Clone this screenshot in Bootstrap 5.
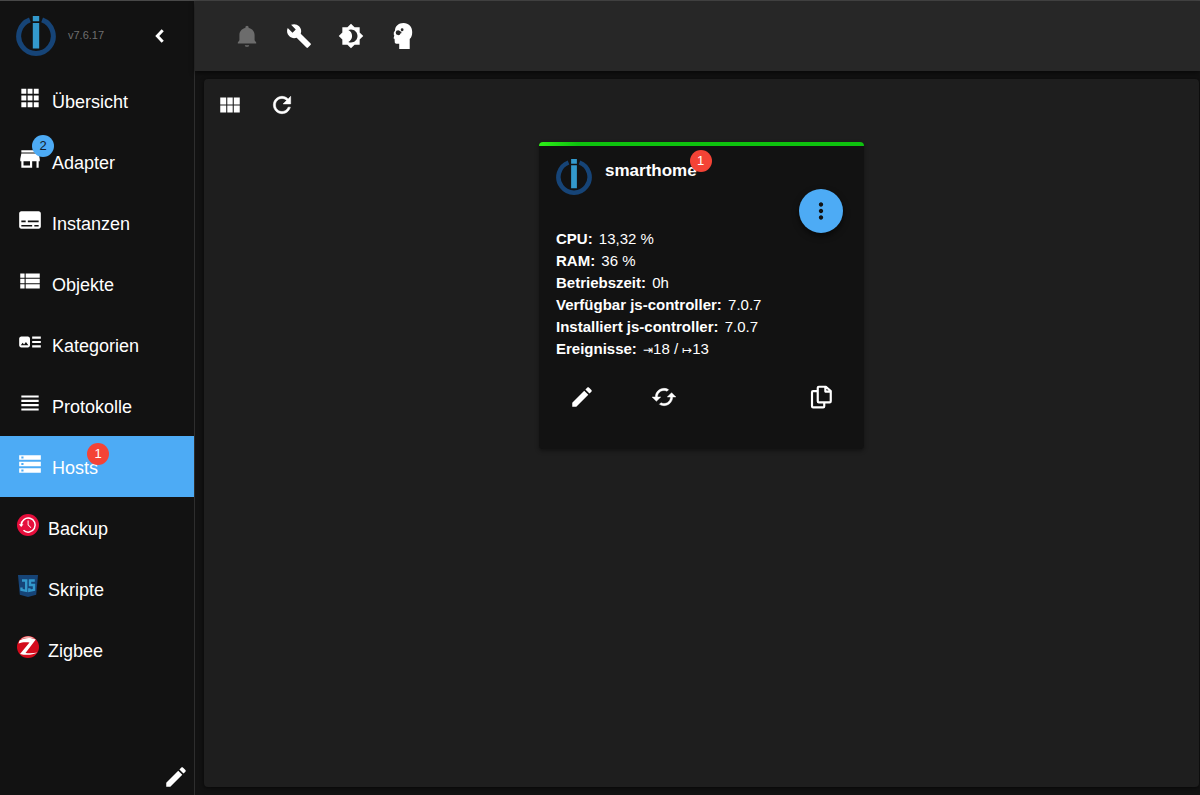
<!DOCTYPE html>
<html lang="de" data-bs-theme="dark">
<head>
<meta charset="utf-8">
<meta name="viewport" content="width=device-width, initial-scale=1">
<title>ioBroker – Hosts</title>
<link href="https://cdn.jsdelivr.net/npm/bootstrap@5.3.0/dist/css/bootstrap.min.css" rel="stylesheet">
<style>
  body { background: #121212; color: #fff; font-family: "Liberation Sans", Arial, sans-serif; }
  .app-shell { border-top: 1px solid #484848; }
  .side-menu { width: 195px; background: #121212; border-right: 1px solid #2e2e2e; }
  .side-head { height: 69px; padding: 0 8px 0 16px; }
  .side-version { color: #6f6f6f; font-size: 11px; margin-left: 12px; }
  .menu-link { height: 61px; padding: 0 17px; color: #fff; font-size: 18px; line-height: 20px; }
  .menu-link:hover { color: #fff; background: #222; }
  .menu-link.active { background: #4dabf5; }
  .menu-link svg { margin-bottom: 5px; }
  .menu-text { margin: 3px 0 0 9px; }
  .icon-26 { width: 26px; height: 26px; fill: currentColor; flex: none; }
  .icon-22 { width: 22px; height: 22px; flex: none; }
  .count-dot { position: absolute; width: 22px; height: 22px; font-size: 13px; line-height: 22px; padding: 0; font-weight: 400; border-radius: 11px; }
  .count-blue { background: #4dabf5; color: #13202c; }
  .count-red { background: #f44336; color: #fff; }
  .count-raised { top: -4px; }
  .icon-btn { width: 52px; height: 52px; padding: 13px; border: 0; color: #fff; display: inline-flex; border-radius: 50%; flex: none; }
  .icon-btn:disabled { color: #6c6c6c; opacity: 1; border: 0; }
  .icon-btn-small { width: 36px; height: 36px; padding: 5px; }
  .top-bar { height: 70px; background: #272727; padding: 0 26px; box-shadow: 0 2px 5px #0009; }
  .work-area { background: #1e1e1e; margin: 8px 1px 8px 9px; border-radius: 4px; box-shadow: 0 1px 4px #000a; }
  .host-card { width: 325px; margin-top: 11px; background: #121212; border: 0; border-radius: 4px; overflow: hidden; box-shadow: 0 2px 4px #0006; }
  .host-status { height: 4px; background: linear-gradient(90deg, #2ef018, #0ec20e 12%, #0ec20e); }
  .host-body { padding: 13px 17px 26px; }
  .host-head { height: 74px; margin-bottom: -5px; }
  .host-name { font-size: 17px; line-height: 20px; font-weight: 700; margin: 2px 0 0 13px; }
  .host-menu { width: 44px; height: 44px; padding: 9px; border: 0; border-radius: 50%; background: #4dabf5; color: #121212; margin-right: 4px; box-shadow: 0 3px 6px #0009; display: flex; }
  .host-facts { font-size: 15px; line-height: 22px; margin: 0 0 11px; }
  .host-facts dt, .host-facts dd { display: inline; margin: 0; }
  .host-facts dd { margin-left: 2px; }
  .event-arrow { font-size: 12px; line-height: 1; }
  .host-actions { gap: 30px; }
</style>
</head>
<body>
<svg width="0" height="0" class="d-none" aria-hidden="true">
  <symbol id="logo" viewBox="0 0 40 40">
    <path d="M13.900 3.900A17.300 17.300 0 1 0 26.100 3.900" fill="none" stroke="#164477" stroke-width="5"/>
    <path d="M16.800 0h6.400v5.300h-6.400zM16.800 7h6.400v25.500h-6.400z" fill="#3399cc"/>
  </symbol>
  <symbol id="pencil" viewBox="0 0 24 24"><path d="M3 17.250V21h3.750L17.810 9.940l-3.750-3.750L3 17.250zM20.710 7.040c.39-.39.39-1.020 0-1.410l-2.340-2.340c-.39-.39-1.020-.39-1.410 0l-1.830 1.830 3.750 3.750 1.830-1.830z"/></symbol>
</svg>

<div class="app-shell d-flex min-vh-100">
  <aside class="side-menu d-flex flex-column flex-shrink-0">
    <div class="side-head d-flex align-items-center">
      <svg width="40" height="40"><use href="#logo"/></svg>
      <span class="side-version">v7.6.17</span>
      <button class="btn icon-btn ms-auto" type="button" aria-label="Menü einklappen">
        <svg class="icon-26" viewBox="0 0 24 24"><path d="M14.500 6.700L9.500 12l5 5.300" fill="none" stroke="currentColor" stroke-width="2.700"/></svg>
      </button>
    </div>
    <nav class="nav flex-column flex-nowrap">
      <a class="menu-link d-flex align-items-center text-decoration-none" href="#">
        <svg class="icon-26" viewBox="0 0 24 24"><path d="M4 8h4.600V3.500H4V8zm5.800 12.500h4.500V16H9.800v4.500zm-5.800 0h4.600V16H4v4.500zm0-6.200h4.600V9.700H4v4.600zm5.800 0h4.500V9.700H9.800v4.600zM15.500 3.500V8H20V3.500h-4.500zM9.800 8h4.500V3.500H9.800V8zm5.700 6.300H20V9.700h-4.500v4.600zm0 6.200H20V16h-4.500v4.500z"/></svg>
        <span class="menu-text">Übersicht</span>
      </a>
      <a class="menu-link d-flex align-items-center text-decoration-none" href="#">
        <span class="position-relative d-flex">
          <svg class="icon-26" viewBox="0 0 24 24"><path d="M20 4H4v2h16V4zm1 10v-2l-1-5H4l-1 5v2h1v6h10v-6h4v6h2v-6h1zm-9 4H6v-4h6v4z"/></svg>
          <span class="badge count-dot count-blue top-0 start-100 translate-middle">2</span>
        </span>
        <span class="menu-text">Adapter</span>
      </a>
      <a class="menu-link d-flex align-items-center text-decoration-none" href="#">
        <svg class="icon-26" viewBox="0 0 24 24"><path d="M20 4H4c-1.100 0-2 .9-2 2v12c0 1.100.9 2 2 2h16c1.100 0 2-.9 2-2V6c0-1.100-.9-2-2-2zM4 12.500h4v1.500H4v-1.500zm10 5.500H4v-1.500h10V18zm6 0h-4v-1.500h4V18zm0-4H10v-1.500h10V14z"/></svg>
        <span class="menu-text">Instanzen</span>
      </a>
      <a class="menu-link d-flex align-items-center text-decoration-none" href="#">
        <svg class="icon-26" viewBox="0 0 24 24"><path d="M3 14h4v-4H3v4zm0 5h4v-4H3v4zM3 9h4V5H3v4zm5 5h13v-4H8v4zm0 5h13v-4H8v4zM8 5v4h13V5H8z"/></svg>
        <span class="menu-text">Objekte</span>
      </a>
      <a class="menu-link d-flex align-items-center text-decoration-none" href="#">
        <svg class="icon-26" viewBox="0 0 24 24"><path d="M22 13h-8v-2h8v2zm0-6h-8v2h8V7zm-8 10h8v-2h-8v2zm-2-8v6c0 1.100-.9 2-2 2H4c-1.100 0-2-.9-2-2V9c0-1.100.9-2 2-2h6c1.100 0 2 .9 2 2zm-1.500 6l-2.250-3-1.750 2.260-1.250-1.510L3.500 15h7z"/></svg>
        <span class="menu-text">Kategorien</span>
      </a>
      <a class="menu-link d-flex align-items-center text-decoration-none" href="#">
        <svg class="icon-26" viewBox="0 0 24 24"><path d="M4 15h16v-2H4v2zm0 4h16v-2H4v2zm0-8h16V9H4v2zm0-6v2h16V5H4z"/></svg>
        <span class="menu-text">Protokolle</span>
      </a>
      <a class="menu-link active d-flex align-items-center text-decoration-none" href="#" aria-current="page">
        <svg class="icon-26" viewBox="0 0 24 24"><path fill-rule="evenodd" d="M2 20h20v-4H2v4zm2-3h2v2H4v-2zM2 4v4h20V4H2zm4 3H4V5h2v2zm-4 7h20v-4H2v4zm2-3h2v2H4v-2z"/></svg>
        <span class="menu-text position-relative">Hosts<span class="badge count-dot count-red count-raised start-100 translate-middle">1</span></span>
      </a>
      <a class="menu-link d-flex align-items-center text-decoration-none" href="#">
        <svg class="icon-22" viewBox="0 0 22 22"><circle cx="11" cy="11" r="11" fill="#e60e3c"/><path d="M4.200 11a7 7 0 1 1 2.300 5.300" fill="none" stroke="#fff" stroke-width="1.500"/><path d="M1.900 10.200h4.600L4.200 13zM10.600 6.500h1v4.200l2.700 2.700-.7.7-3-3z" fill="#fff"/></svg>
        <span class="menu-text">Backup</span>
      </a>
      <a class="menu-link d-flex align-items-center text-decoration-none" href="#">
        <svg class="icon-22" viewBox="0 0 22 22"><path d="M1 0h20l-1.800 19.800L11 22l-8.200-2.200z" fill="#164477"/><path d="M5 5.500h4.200v10.300l-4.700-1v-2.300M17.800 5.500h-4.800v4.500h4v4.800l-4.700 1v-2.500" fill="none" stroke="#3399cc" stroke-width="2.400"/></svg>
        <span class="menu-text">Skripte</span>
      </a>
      <a class="menu-link d-flex align-items-center text-decoration-none" href="#">
        <svg class="icon-22" viewBox="0 0 22 22"><circle cx="11" cy="11" r="11" fill="#d30b1c"/><path d="M2.500 4.500C7 1.500 14 1 18.800 3.500L8.500 17c4 .5 8 .3 12-.5-5 2.500-11.300 3-17.500 1.500L12.500 6.500C9 5.900 5 6 1.500 7.500z" fill="#fff"/><path d="M3.500 3.400C8-.8 14-.8 18 2.700 13 1.700 8 2 3.500 3.400z" fill="#efb1ad"/></svg>
        <span class="menu-text">Zigbee</span>
      </a>
    </nav>
    <button class="btn icon-btn icon-btn-small ms-auto mt-auto" type="button" aria-label="Menü bearbeiten">
      <svg class="icon-26"><use href="#pencil"/></svg>
    </button>
  </aside>

  <div class="d-flex flex-column flex-grow-1">
    <header class="top-bar d-flex align-items-center">
      <button class="btn icon-btn" type="button" disabled aria-label="Benachrichtigungen"><svg class="icon-26" viewBox="0 0 24 24"><path d="M12 22c1.100 0 2-.6 2-1.500h-4c0 .9.890 1.500 2 1.500zm7-6v-5c0-3.070-2.140-5.640-5.500-6.320V4c0-.83-.67-1.500-1.500-1.500s-1.500.67-1.500 1.500v.68C7.130 5.360 5 7.920 5 11v5l-1.500 2v1h17v-1L19 16z"/></svg></button>
      <button class="btn icon-btn" type="button" aria-label="Systemeinstellungen"><svg class="icon-26" viewBox="0 0 24 24"><path d="M22.700 19l-9.100-9.100c.9-2.300.4-5-1.500-6.900-2-2-5-2.400-7.400-1.300L9 6 6 9 1.600 4.700C.4 7.100.9 10.100 2.900 12.100c1.900 1.900 4.600 2.400 6.900 1.500l9.100 9.100c.4.4 1 .4 1.400 0l2.300-2.300c.5-.4.5-1.100.1-1.400z"/></svg></button>
      <button class="btn icon-btn" type="button" aria-label="Farbschema"><svg class="icon-26" viewBox="0 0 24 24"><path d="M20 8.690V4h-4.690L12 .69 8.690 4H4v4.690L.69 12 4 15.310V20h4.690L12 23.310 15.310 20H20v-4.690L23.310 12 20 8.690zM12 18c-.89 0-1.740-.2-2.500-.55C11.560 16.500 13 14.420 13 12s-1.440-4.500-3.500-5.450C10.260 6.200 11.110 6 12 6c3.310 0 6 2.690 6 6s-2.690 6-6 6z"/></svg></button>
      <button class="btn icon-btn" type="button" aria-label="Expertenmodus"><svg class="icon-26" viewBox="0 0 24 24"><path fill-rule="evenodd" d="M12.500 0C7.700 0 4.700 3 4.600 7L3.500 8.800v2l.5.700-.6 2c-.2.600.1 1 .8 1.100l.2 3.200c.1.900.6 1.300 1.500 1.300h2.600V24h9.700v-9.300c1.700-1.600 2.300-3.700 2.300-6.500C20.500 3.300 17.200 0 12.500 0zM7.600 6.600a2.300 2.300 0 0 1 2 1.300h.9v1.500h-.7a2.300 2.300 0 1 1-2.200-2.800zM11.200 4.900a1.300 1.300 0 1 1 0 2.600 1.300 1.300 0 0 1 0-2.600z"/></svg></button>
    </header>
    <main class="work-area flex-grow-1">
      <div class="d-flex">
        <button class="btn icon-btn" type="button" aria-label="Kachelansicht"><svg class="icon-26" viewBox="0 0 24 24"><path d="M3 11.500h5.500V5H3v6.500zm0 7.500h5.500v-6.500H3V19zm6.500 0h5v-6.500h-5V19zm6 0H21v-6.500h-5.500V19zm-6-7.500h5V5h-5v6.500zm6-6.500v6.500H21V5h-5.500z"/></svg></button>
        <button class="btn icon-btn" type="button" aria-label="Aktualisieren"><svg class="icon-26" viewBox="0 0 24 24"><path stroke="currentColor" stroke-width=".5" d="M17.650 6.350C16.200 4.900 14.210 4 12 4c-4.420 0-7.990 3.580-7.990 8s3.570 8 7.990 8c3.730 0 6.840-2.550 7.730-6h-2.080c-.82 2.330-3.040 4-5.650 4-3.310 0-6-2.690-6-6s2.690-6 6-6c1.660 0 3.140.69 4.220 1.780L13 11h7V4l-2.350 2.350z"/></svg></button>
      </div>
      <section class="card host-card mx-auto">
        <div class="host-status"></div>
        <div class="host-body">
          <div class="host-head d-flex">
            <svg width="36" height="36"><use href="#logo"/></svg>
            <h2 class="host-name position-relative align-self-start">smarthome<span class="badge count-dot count-red top-0 start-100 translate-middle ms-1">1</span></h2>
            <button class="host-menu ms-auto align-self-end" type="button" aria-label="Host-Menü"><svg class="icon-26" viewBox="0 0 24 24"><path d="M12 8c1.100 0 2-.9 2-2s-.9-2-2-2-2 .9-2 2 .9 2 2 2zm0 2c-1.100 0-2 .9-2 2s.9 2 2 2 2-.9 2-2-.9-2-2-2zm0 6c-1.100 0-2 .9-2 2s.9 2 2 2 2-.9 2-2-.9-2-2-2z"/></svg></button>
          </div>
          <dl class="host-facts">
            <div><dt>CPU:</dt> <dd>13,32 %</dd></div>
            <div><dt>RAM:</dt> <dd>36 %</dd></div>
            <div><dt>Betriebszeit:</dt> <dd>0h</dd></div>
            <div><dt>Verfügbar js-controller:</dt> <dd>7.0.7</dd></div>
            <div><dt>Installiert js-controller:</dt> <dd>7.0.7</dd></div>
            <div><dt>Ereignisse:</dt> <dd><span class="event-arrow">⇥</span>18 / <span class="event-arrow">↦</span>13</dd></div>
          </dl>
          <div class="host-actions d-flex">
            <button class="btn icon-btn" type="button" aria-label="Bearbeiten"><svg class="icon-26"><use href="#pencil"/></svg></button>
            <button class="btn icon-btn" type="button" aria-label="Neustart"><svg class="icon-26" viewBox="0 0 24 24"><path stroke="currentColor" stroke-width=".4" d="M19 8l-4 4h3c0 3.310-2.690 6-6 6-1.010 0-1.970-.25-2.800-.7l-1.460 1.460C8.970 19.540 10.430 20 12 20c4.420 0 8-3.580 8-8h3l-4-4zM6 12c0-3.310 2.690-6 6-6 1.010 0 1.970.25 2.800.7l1.460-1.460C15.030 4.460 13.570 4 12 4c-4.420 0-8 3.580-8 8H1l4 4 4-4H6z"/></svg></button>
            <button class="btn icon-btn ms-auto" type="button" aria-label="Kopieren"><svg class="icon-26" viewBox="0 0 24 24"><g fill="none" stroke="currentColor" stroke-width="2" stroke-linejoin="round"><path d="M10 2.500h6.500L21 6.500v9.500a1 1 0 0 1-1 1H10a1 1 0 0 1-1-1V3.500a1 1 0 0 1 1-1zM16 3v4h4"/><path d="M8.500 6.500H4.700a1 1 0 0 0-1 1v13a1 1 0 0 0 1 1h9.300a1 1 0 0 0 1-1V17.500"/></g></svg></button>
          </div>
        </div>
      </section>
    </main>
  </div>
</div>
<script src="https://cdn.jsdelivr.net/npm/bootstrap@5.3.0/dist/js/bootstrap.bundle.min.js"></script>
</body>
</html>
